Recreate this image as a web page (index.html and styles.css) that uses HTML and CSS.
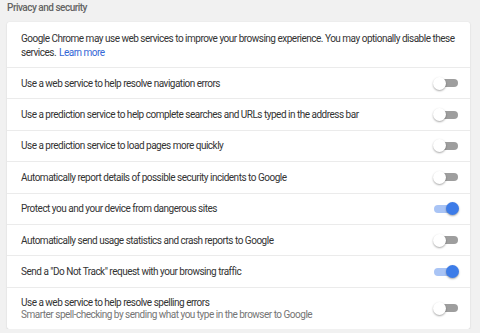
FILE: index.html
```html
<!DOCTYPE html>
<html lang="en">
<head>
    <meta charset="UTF-8">
    <title>Settings - Privacy and security</title>
    <link rel="stylesheet" href="styles.css">
</head>
<body>
    <div class="section">
        <h2 class="section-title">Privacy and security</h2>
        <div class="card">
            <div class="intro">
                Google Chrome may use web services to improve your browsing experience. You may optionally disable these services.<a href="#" class="link">Learn more</a>
            </div>
            <div class="row">
                <span class="label">Use a web service to help resolve navigation errors</span>
                <span class="toggle"></span>
            </div>
            <div class="row">
                <span class="label">Use a prediction service to help complete searches and URLs typed in the address bar</span>
                <span class="toggle"></span>
            </div>
            <div class="row">
                <span class="label">Use a prediction service to load pages more quickly</span>
                <span class="toggle"></span>
            </div>
            <div class="row">
                <span class="label">Automatically report details of possible security incidents to Google</span>
                <span class="toggle"></span>
            </div>
            <div class="row">
                <span class="label">Protect you and your device from dangerous sites</span>
                <span class="toggle on"></span>
            </div>
            <div class="row">
                <span class="label">Automatically send usage statistics and crash reports to Google</span>
                <span class="toggle"></span>
            </div>
            <div class="row">
                <span class="label">Send a "Do Not Track" request with your browsing traffic</span>
                <span class="toggle on"></span>
            </div>
            <div class="row tall">
                <div class="label">
                    <div>Use a web service to help resolve spelling errors</div>
                    <div class="sub">Smarter spell-checking by sending what you type in the browser to Google</div>
                </div>
                <span class="toggle"></span>
            </div>
        </div>
    </div>
</body>
</html>
```

FILE: styles.css
```css
* {
    margin: 0;
    padding: 0;
    box-sizing: border-box;
}

body {
    font-family: 'Roboto', 'Liberation Sans', sans-serif;
    font-size: 10px;
    letter-spacing: -0.5px;
    background: #f1f1f1;
    color: #333;
}

.section {
    padding: 0 10px 0 7px;
}

.section-title {
    font-size: 10px;
    font-weight: 500;
    color: #646464;
    line-height: 14px;
    padding-top: 1px;
    height: 22px;
}

.card {
    background: white;
    border-radius: 2px;
    box-shadow: 0 0 1px rgba(0,0,0,0.12), 0 1px 2px rgba(0,0,0,0.1);
}

.intro {
    height: 45px;
    padding: 10px 12px 0 14px;
    line-height: 14px;
}

.link {
    color: #3367d6;
    text-decoration: none;
    margin-left: 3px;
}

.row {
    display: flex;
    align-items: center;
    justify-content: space-between;
    height: 31.4px;
    padding: 0 12px 0 14px;
    border-top: 1px solid #ebebeb;
}

.row.tall {
    height: 42px;
}

.sub {
    color: #757575;
    margin-top: 1px;
}

.toggle {
    position: relative;
    width: 24px;
    height: 8px;
    border-radius: 4px;
    background: #9e9e9e;
    flex-shrink: 0;
}

.toggle::after {
    content: '';
    position: absolute;
    left: -1px;
    top: -2.5px;
    width: 13px;
    height: 13px;
    border-radius: 50%;
    background: white;
    box-shadow: 0 1px 2px rgba(0,0,0,0.35);
}

.toggle.on {
    background: #a9c4f5;
}

.toggle.on::after {
    left: auto;
    right: -1px;
    background: #3d7ce8;
}
```
